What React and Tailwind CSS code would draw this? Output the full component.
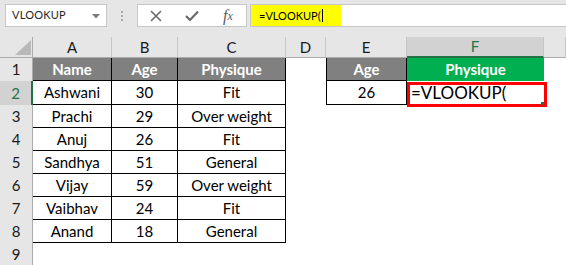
import React from "react";

const data = [
  ["Name", "Age", "Physique"],
  ["Ashwani", "30", "Fit"],
  ["Prachi", "29", "Over weight"],
  ["Anuj", "26", "Fit"],
  ["Sandhya", "51", "General"],
  ["Vijay", "59", "Over weight"],
  ["Vaibhav", "24", "Fit"],
  ["Anand", "18", "General"],
];

const colLetters = ["A", "B", "C", "D", "E", "F", ""];

function FormulaBar() {
  return (
    <div className="h-[37px] bg-[#e6e6e6] flex items-start pt-[4px]">
      <div className="ml-[5px] w-[102px] h-[23px] bg-white border border-[#c6c6c6] flex items-center justify-between pl-[6px] pr-[6px]">
        <span className="text-[11px] text-[#262626] tracking-[0.2px]">VLOOKUP</span>
        <svg width="8" height="5" viewBox="0 0 8 5" className="mt-[1px]">
          <path d="M0 0 L8 0 L4 4.5 Z" fill="#7a7a7a" />
        </svg>
      </div>
      <div className="w-[30px] h-[23px] flex flex-col items-center justify-center gap-[2px]">
        <div className="w-[2px] h-[2px] bg-[#a8a8a8]" />
        <div className="w-[2px] h-[2px] bg-[#a8a8a8]" />
        <div className="w-[2px] h-[2px] bg-[#a8a8a8]" />
      </div>
      <div className="w-[110px] h-[23px] bg-white border border-[#c6c6c6] grid grid-cols-[36px_36px_36px] items-center">
        <div className="flex items-center justify-center">
          <svg width="12" height="12" viewBox="0 0 12 12">
            <path d="M1 1 L11 11 M11 1 L1 11" stroke="#6b6b6b" strokeWidth="1.6" fill="none" />
          </svg>
        </div>
        <div className="flex items-center justify-center">
          <svg width="14" height="12" viewBox="0 0 14 12">
            <path d="M1 6 L5 10 L13 1.5" stroke="#6b6b6b" strokeWidth="2.2" fill="none" />
          </svg>
        </div>
        <div className="flex items-center justify-center font-['Liberation_Serif',serif] italic text-[16px] text-[#5a5a5a] leading-none">
          f<span className="text-[12px]">x</span>
        </div>
      </div>
      <div className="ml-[3px] flex-1 h-[23px] bg-white border border-[#c6c6c6] border-r-0 flex items-stretch">
        <div className="w-[90px] bg-[#ffff00] flex items-center pl-[8px]">
          <span className="text-[11px] text-black leading-none">=VLOOKUP(</span>
          <span className="ml-[1px] w-[1px] h-[13px] bg-black" />
        </div>
      </div>
    </div>
  );
}

function HeaderRow() {
  return (
    <>
      <div className="bg-[#e6e6e6] border-r border-b border-[#ababab] relative">
        <svg width="33" height="21" viewBox="0 0 33 21" className="absolute left-0 top-0">
          <path d="M15 18 L31 18 L31 3 Z" fill="#b9b9b9" />
        </svg>
      </div>
      {colLetters.map((c, i) =>
        c === "F" ? (
          <div
            key={i}
            className="bg-[#d2d2d2] border-r border-[#c6c6c6] border-b-2 border-b-[#217346] flex items-center justify-center text-[15px] text-[#217346]"
          >
            {c}
          </div>
        ) : (
          <div
            key={i}
            className="bg-[#e6e6e6] border-r border-[#c6c6c6] border-b border-b-[#ababab] flex items-center justify-center text-[15px] text-[#1a1a1a]"
          >
            {c}
          </div>
        )
      )}
    </>
  );
}

function RowHeader({ n }) {
  if (n === 2) {
    return (
      <div className="bg-[#d2d2d2] border-r-2 border-[#217346] flex items-center justify-center text-[15px] text-[#217346]">
        {n}
      </div>
    );
  }
  return (
    <div className="bg-[#e6e6e6] border-r border-[#ababab] flex items-center justify-center text-[15px] text-[#1a1a1a]">
      {n}
    </div>
  );
}

export default function App() {
  return (
    <div className="w-[566px] h-[265px] overflow-hidden bg-white font-['Lato','Noto_Sans',sans-serif]">
      <FormulaBar />
      <div className="grid grid-cols-[33px_79px_66px_108px_40px_81px_137px_22px] grid-rows-[21px_23px_24px_23px_23px_23px_23px_23px_23px_22px]">
        <HeaderRow />
        {data.map((row, r) => (
          <React.Fragment key={r}>
            <RowHeader n={r + 1} />
            {row.map((v, c) =>
              r === 0 ? (
                <div
                  key={c}
                  className="bg-[#808080] text-white font-bold text-[15px] border-r border-b border-black flex items-center justify-center"
                >
                  {v}
                </div>
              ) : (
                <div
                  key={c}
                  className="text-black text-[15px] border-r border-b border-black flex items-center justify-center"
                >
                  {v}
                </div>
              )
            )}
            <div />
            {r === 0 && (
              <>
                <div className="bg-[#808080] text-white font-bold text-[15px] border-l border-r border-b border-black flex items-center justify-center">
                  Age
                </div>
                <div className="bg-[#00b050] text-white font-bold text-[15px] flex items-center justify-center">
                  Physique
                </div>
              </>
            )}
            {r === 1 && (
              <>
                <div className="text-black text-[15px] border-l border-r border-b border-black flex items-center justify-center">
                  26
                </div>
                <div className="relative flex items-center pl-[4px] text-black text-[17px]">
                  =VLOOKUP(
                  <div className="absolute left-0 top-[1px] w-[140px] h-[25px] border-[3px] border-[#ff0000] z-10" />
                  <div className="absolute left-[134px] top-[21px] w-[3px] h-[3px] bg-[#217346] z-20" />
                </div>
              </>
            )}
            {r > 1 && (
              <>
                <div />
                <div />
              </>
            )}
            <div />
          </React.Fragment>
        ))}
        <RowHeader n={9} />
        <div />
        <div />
        <div />
        <div />
        <div />
        <div />
        <div />
      </div>
    </div>
  );
}
